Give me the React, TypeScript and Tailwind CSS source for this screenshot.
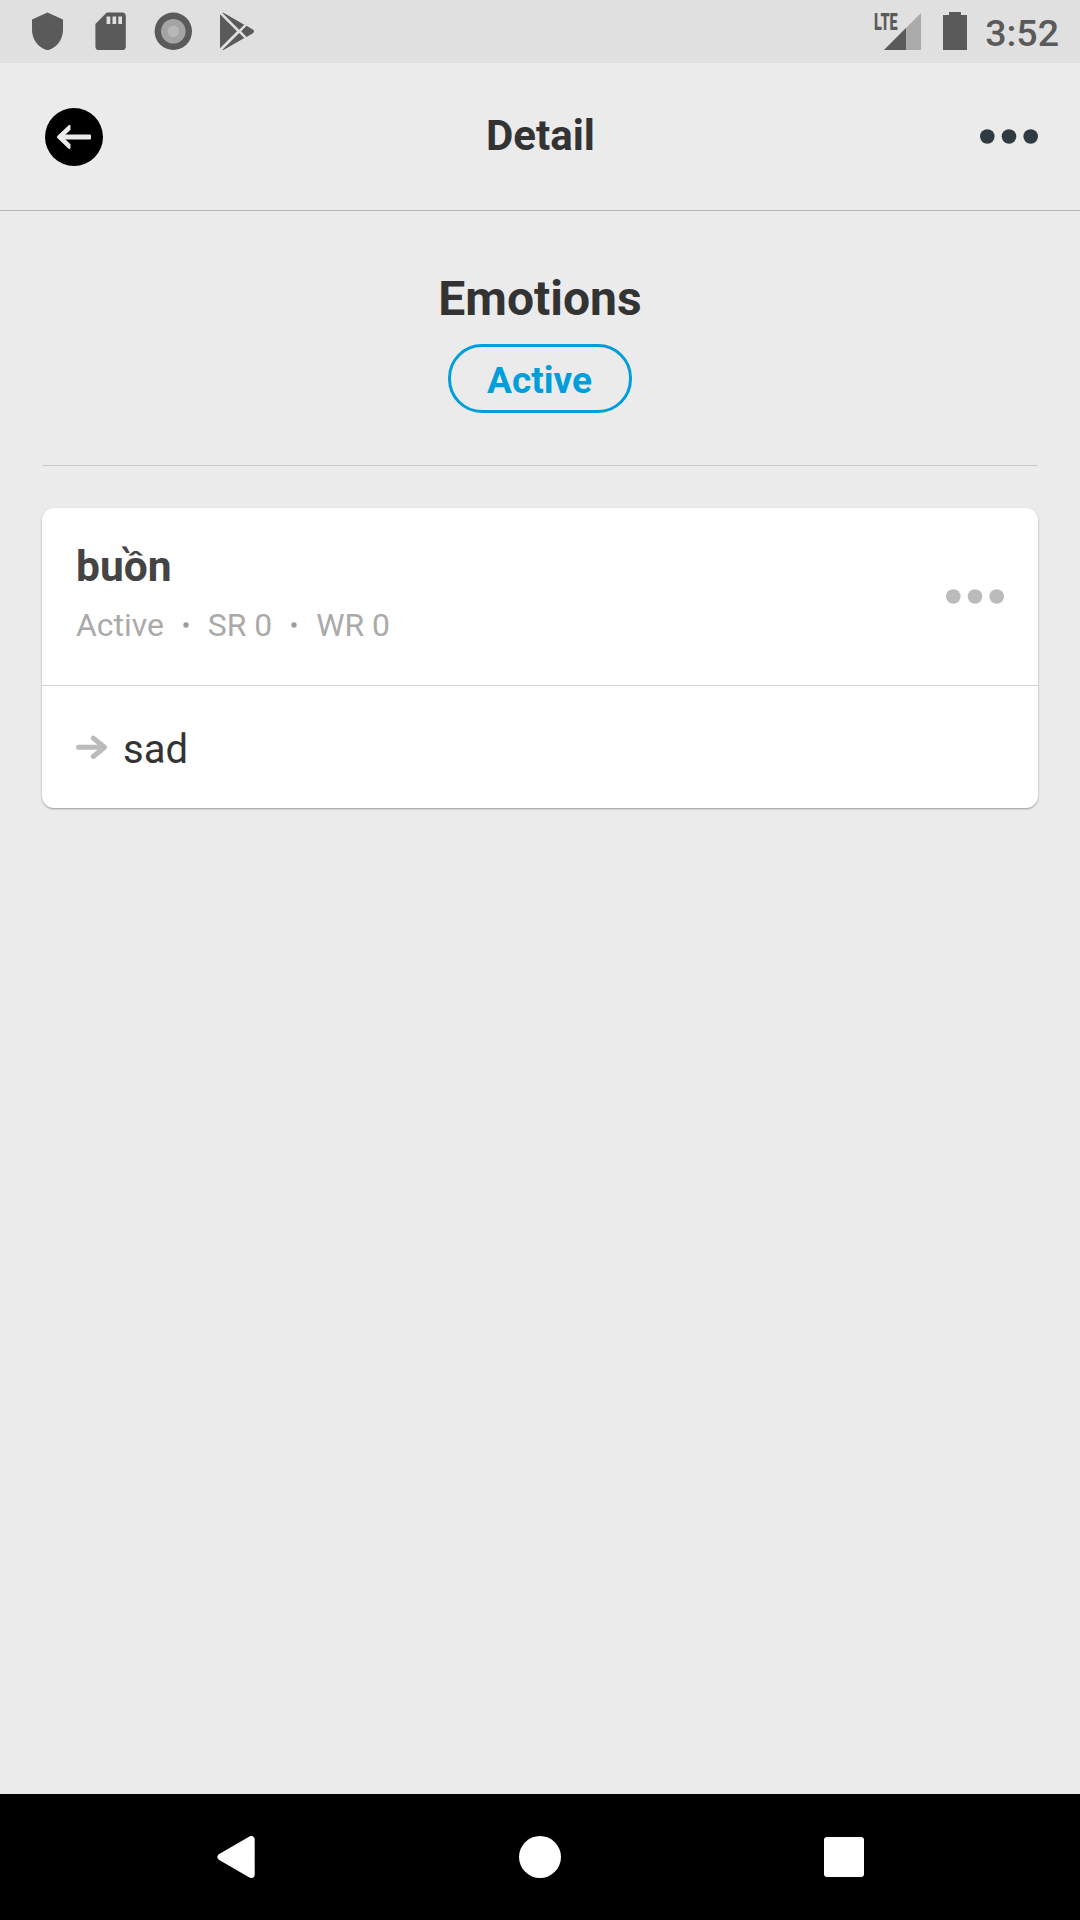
function Dots({ className }: { className: string }) {
  return (
    <svg viewBox="0 0 58 15" className={`h-[15px] w-[58px] ${className}`} fill="currentColor">
      <circle cx="7.3" cy="7.5" r="7.3" />
      <circle cx="29" cy="7.5" r="7.3" />
      <circle cx="50.7" cy="7.5" r="7.3" />
    </svg>
  );
}

function StatusBar() {
  return (
    <div className="flex h-[63px] items-start bg-[#e0e0e0] pt-3 pr-[21px] pl-8 text-[#5a5a5a]">
      <svg viewBox="0 0 31 38" className="h-[38px] w-[31px]" fill="currentColor">
        <path d="M15.5 .5 31 7.5V18C31 27.5 24.5 36 15.5 38.3 6.5 36 0 27.5 0 18V7.5Z" />
      </svg>
      <svg viewBox="0 0 31 38" className="ml-8 h-[38px] w-[31px]" fill="currentColor">
        <path d="M11.8 .6H27.2a3.6 3.6 0 0 1 3.6 3.6V34.4a3.6 3.6 0 0 1-3.6 3.6H4a3.6 3.6 0 0 1-3.6-3.6V12Z" />
        <path fill="#e0e0e0" d="M11.6 4.4h3.7V12h-3.7zM17.5 4.4h3.7V12h-3.7zM23.3 4.4h3.7V12h-3.7z" />
      </svg>
      <svg viewBox="0 0 38 38" className="ml-7 h-[38px] w-[38px]">
        <circle cx="19.3" cy="19.3" r="18.7" fill="#5a5a5a" />
        <circle cx="19.3" cy="19.3" r="12.3" fill="#a4a4a4" />
        <circle cx="19.3" cy="19.3" r="5.6" fill="#b8b8b8" />
      </svg>
      <svg viewBox="0 0 35 39" className="ml-7 h-[39px] w-[35px]" fill="currentColor">
        <path d="M0 2.3 17 19.3 0 36.3Z" />
        <path d="M3 .6 24.3 12.7 19.2 17.8 2.7 1.3Z" />
        <path d="M3 38.2 24.3 26 19.2 20.9 2.7 37.5Z" />
        <path d="M26.6 13.8 32.8 17.5Q35.3 19.3 32.8 21.2L26.6 24.9 21.2 19.3Z" />
      </svg>
      <div className="ml-auto flex items-start">
        <div className="relative h-[38px] w-[46px]">
          <svg viewBox="0 0 46 38" className="h-[38px] w-[46px]">
            <path d="M46 1V38H9Z" fill="#aaaaaa" />
            <path d="M31 16V38H9Z" fill="#5a5a5a" />
          </svg>
          <span className="absolute top-[2.5px] -left-px origin-left scale-x-[0.63] text-[23px] leading-[16.5px] font-black">LTE</span>
        </div>
        <svg viewBox="0 0 24 38" className="ml-[22px] h-[38px] w-6" fill="currentColor">
          <path d="M0 3H6V0H18V3H24V38H0Z" />
        </svg>
        <span className="ml-[18px] text-[37.5px] leading-[42px] font-medium">3:52</span>
      </div>
    </div>
  );
}

function Header() {
  return (
    <header className="grid h-[148px] grid-cols-3 items-center border-b border-[#b5b5b5] px-[42px]">
      <button className="ml-[3px] h-[58px] w-[58px]" aria-label="Back">
        <svg viewBox="0 0 58 58" className="h-[58px] w-[58px]">
          <circle cx="29" cy="29" r="29" fill="#000" />
          <path
            fill="#ebebeb"
            d="M12.3 27.9 23.6 17.2Q24.4 16.6 25.5 17.3V21.8L19.8 27.2Q20.3 26.5 21.5 26.5H45Q46 26.5 46 27.5V30.5Q46 31.5 45 31.5H21.5Q20.3 31.5 19.8 30.8L25.5 36.2V40.5Q24.4 41.3 23.6 40.7L12.3 30.1Q11.5 29 12.3 27.9Z"
          />
        </svg>
      </button>
      <h1 className="mb-0.5 ml-px text-center text-[42px] leading-[50px] font-bold text-[#333333]">Detail</h1>
      <button className="mb-px justify-self-end" aria-label="More options">
        <Dots className="text-[#2f3b41]" />
      </button>
    </header>
  );
}

function Bullet() {
  return (
    <svg viewBox="0 0 6 6" className="h-1.5 w-1.5" fill="#9c9c9c">
      <circle cx="3" cy="3" r="2.7" />
    </svg>
  );
}

function WordCard() {
  return (
    <section className="mt-[42px] h-[300px] rounded-[12px] bg-white shadow-[0_1px_2px_rgba(0,0,0,0.35)]">
      <div className="flex h-[178px] items-center justify-between border-b border-[#d1d1d1] px-[34px]">
        <div className="mb-2">
          <h3 className="text-[42.5px] leading-[50px] font-bold text-[#444444]">buồn</h3>
          <div className="mt-[14px] flex items-center text-[31.9px] leading-[38px] text-[#aaaaaa]">
            <span className="mr-[19px]">Active</span>
            <Bullet />
            <span className="mx-[19px]">SR 0</span>
            <Bullet />
            <span className="ml-[19px]">WR 0</span>
          </div>
        </div>
        <Dots className="text-[#bbbbbb]" />
      </div>
      <div className="flex h-[122px] items-center px-[34px]">
        <svg viewBox="0 0 32 24" className="h-6 w-8" fill="none" stroke="#bbbbbb" strokeWidth="5" strokeLinecap="round" strokeLinejoin="round">
          <path d="M2.5 12.3H28M17.3 3.1 28.5 12.3 17.3 21.5" />
        </svg>
        <span className="mt-1.5 ml-[15px] text-[40px] leading-[48px] text-[#333333]">sad</span>
      </div>
    </section>
  );
}

function NavigationBar() {
  return (
    <nav className="flex h-[126px] items-center justify-between bg-black pr-[216px] pl-[217px] text-white">
      <svg viewBox="0 0 38 42" className="h-[42px] w-[38px]" fill="currentColor" stroke="currentColor" strokeWidth="7" strokeLinejoin="round">
        <path d="M34.2 3.5V38.5L4 21Z" />
      </svg>
      <div className="h-[42px] w-[42px] rounded-full bg-white" />
      <div className="h-10 w-10 rounded-[3px] bg-white" />
    </nav>
  );
}

export default function App() {
  return (
    <div className="flex h-[1920px] w-[1080px] flex-col overflow-hidden bg-[#ebebeb] font-['Roboto',sans-serif]">
      <StatusBar />
      <Header />
      <main className="flex-1 px-[42px] pt-[60px]">
        <div className="flex flex-col items-center border-b border-[#cacaca] pb-[52px]">
          <h2 className="text-[48px] leading-[56px] font-bold text-[#333333]">Emotions</h2>
          <div className="mt-[17px] flex h-[69px] w-[184px] items-center justify-center rounded-[34px] border-3 border-[#009fdb] pt-[5px] pr-px text-[37px] leading-[44px] font-bold text-[#009fdb]">
            Active
          </div>
        </div>
        <WordCard />
      </main>
      <NavigationBar />
    </div>
  );
}
